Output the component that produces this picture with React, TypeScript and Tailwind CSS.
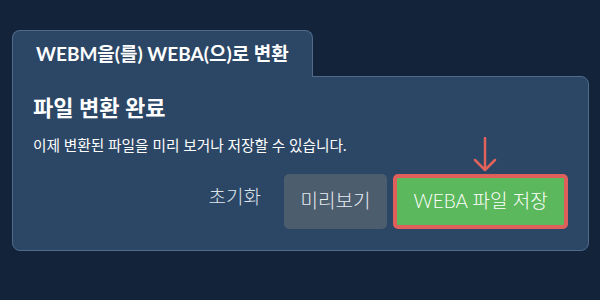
import React from "react";

export default function App() {
  const font = { fontFamily: "Lato, 'Noto Sans CJK KR', 'Noto Sans', sans-serif" };
  return (
    <div className="w-[600px] h-[300px] bg-[#12233a] pt-[30px] pl-[12px]" style={font}>
      <div className="relative z-10 -mb-px w-[301px] h-[47px] bg-[#2c4766] border border-b-0 border-[#4f6a8a] rounded-t-[8px] flex items-center pl-[23px]">
        <span className="text-white font-bold text-[19px]">WEBM을(를) WEBA(으)로 변환</span>
      </div>
      <div className="w-[577px] h-[175px] bg-[#2c4766] border border-[#4f6a8a] rounded-b-[8px] rounded-tr-[8px] px-[20px] pt-[17px] flex flex-col">
        <div className="text-white text-[22px] font-semibold leading-[28px]">파일 변환 완료</div>
        <div className="text-white text-[14.7px] leading-[20px] mt-[13px]">이제 변환된 파일을 미리 보거나 저장할 수 있습니다.</div>
        <div className="flex justify-end items-center mt-[19px]">
          <span className="text-[#dfe5ec] text-[19px] font-light mr-[23px] -mt-[8px]">초기화</span>
          <button className="w-[103px] h-[55px] rounded-[5px] bg-[#4c5d6e] text-[#e8edf2] text-[19px] font-light">미리보기</button>
          <div className="relative ml-[6px]">
            <svg className="absolute left-[80px] -top-[37px]" width="24" height="36" viewBox="0 0 24 36" fill="none">
              <path d="M12 1 V33 M2 23 L12 33 L22 23" stroke="#e0625a" strokeWidth="2.5" strokeLinecap="round" strokeLinejoin="round" />
            </svg>
            <button className="w-[175px] h-[55px] rounded-[5px] bg-[#5cb85c] border-[4px] border-[#df5f5a] text-white text-[19px] font-light">WEBA 파일 저장</button>
          </div>
        </div>
      </div>
    </div>
  );
}
